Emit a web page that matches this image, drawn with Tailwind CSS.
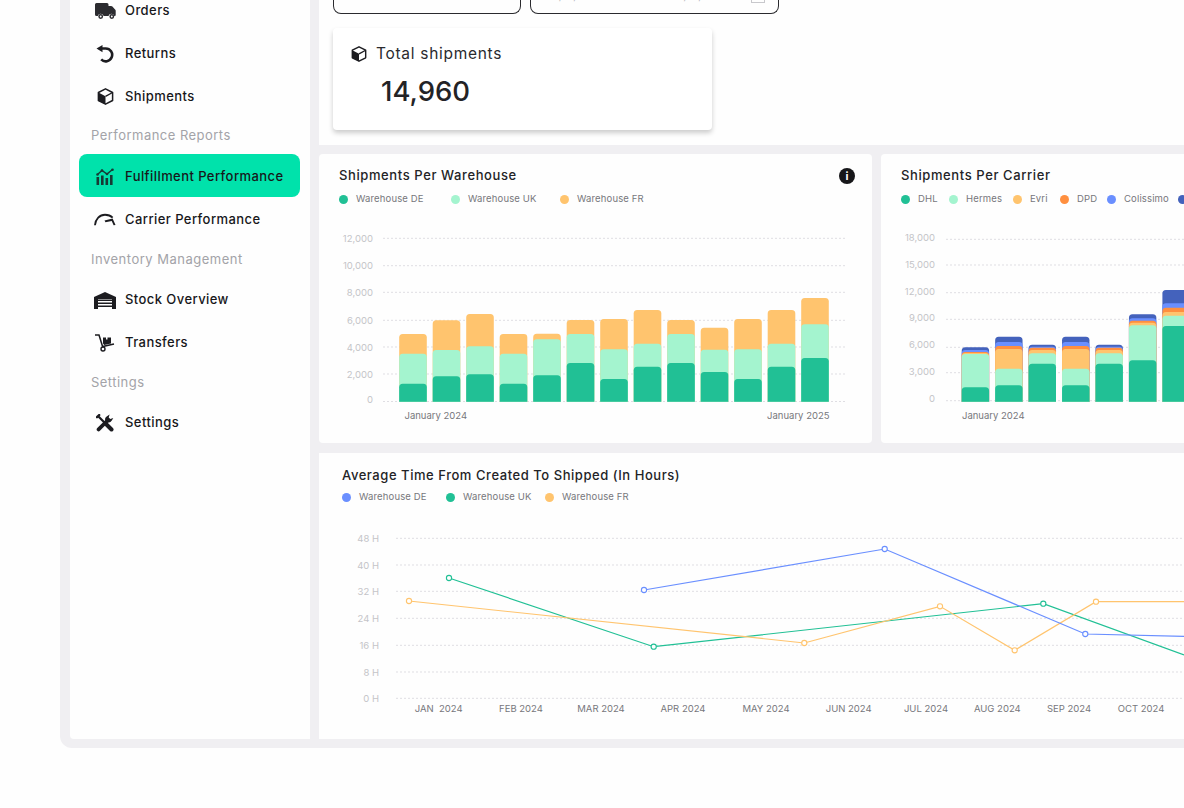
<!DOCTYPE html>
<html lang="en">
<head>
    <meta charset="UTF-8">
    <meta name="viewport" content="width=device-width, initial-scale=1.0">
    <title>Fulfillment Performance</title>
    <script src="https://cdn.jsdelivr.net/npm/@tailwindcss/browser@4"></script>
</head>
<body class="bg-[#fefefe] font-['Inter',sans-serif] text-[#1c1c20] overflow-hidden">
    <div class="ml-[60px] h-[748px] w-[1124px] bg-[#f0eff2] rounded-bl-[12px] overflow-hidden flex pl-[10px] pb-[9px] gap-[9px]">

        <!-- sidebar -->
        <aside class="w-[240px] shrink-0 bg-[#fefefe] rounded-bl-[4px] overflow-hidden pl-[9px] pr-[10px]">
            <nav class="-mt-[12px] text-[13px] tracking-[0.43px] font-medium text-[#17171a]">
                <a class="h-[43px] flex items-center gap-[9px] pl-[15px] pt-[2px]">
                    <span class="w-[22px] flex justify-center">
                        <svg width="21" height="16" viewBox="0 0 21 16" fill="#2b2b2f"><path d="M1.5 0H12a1.5 1.5 0 0 1 1.5 1.5V3h2.6c.5 0 1 .2 1.3.6l2.9 3.2c.3.3.4.7.4 1.1V12a1 1 0 0 1-1 1h-.4a3 3 0 0 0-5.8 0H8.6a3 3 0 0 0-5.8 0H1.5A1.5 1.5 0 0 1 0 11.5V1.5A1.5 1.5 0 0 1 1.5 0Z"/><circle cx="5.7" cy="13.5" r="1.7" fill="none" stroke="#2b2b2f" stroke-width="1.5"/><circle cx="16.8" cy="13.5" r="1.7" fill="none" stroke="#2b2b2f" stroke-width="1.5"/></svg>
                    </span>
                    Orders
                </a>
                <a class="h-[43px] flex items-center gap-[9px] pl-[15px] pt-[2px]">
                    <span class="w-[22px] flex justify-center">
                        <svg width="18" height="18" viewBox="0 0 18 18" fill="none"><path d="M5 3.5h4.7a6.4 6.4 0 1 1-4.5 10.9" stroke="#1c1c20" stroke-width="2.6"/><path d="M6.5 0V7.2L0.5 3.6Z" fill="#1c1c20"/></svg>
                    </span>
                    Returns
                </a>
                <a class="h-[43px] flex items-center gap-[9px] pl-[15px] pt-[2px]">
                    <span class="w-[22px] flex justify-center">
                        <svg width="17" height="17" viewBox="0 0 17 17"><path d="M8.5 .8 15.6 4.5v8L8.5 16.2 1.4 12.5v-8Z" fill="#fff" stroke="#1c1c20" stroke-width="1.5" stroke-linejoin="round"/><path d="M1.4 4.5 8.5 8.3v7.9L1.4 12.5Z" fill="#1c1c20"/><path d="M8.5 8.3 15.6 4.5" stroke="#1c1c20" stroke-width="1.4"/></svg>
                    </span>
                    Shipments
                </a>
                <p class="h-[37px] flex items-center pl-[12px] pt-[1px] tracking-[0.47px] text-[#a3a3a8] font-normal">Performance Reports</p>
                <a class="h-[43px] flex items-center gap-[9px] pl-[15px] pt-[2px] bg-[#00e2ab] rounded-[8px]">
                    <span class="w-[22px] flex justify-center">
                        <svg width="19" height="17" viewBox="0 0 19 17" fill="#173a35"><rect x="0.5" y="9" width="2.6" height="8"/><rect x="5" y="7.5" width="2.6" height="9.5"/><rect x="9.5" y="10" width="2.6" height="7"/><rect x="14" y="7" width="2.6" height="10"/><path d="M1.5 6.5 6 2.5l5 3.5 5.5-4.5" fill="none" stroke="#173a35" stroke-width="1.4"/><circle cx="1.5" cy="6.5" r="1.3"/><circle cx="6" cy="2.5" r="1.3"/><circle cx="11" cy="6" r="1.3"/><circle cx="16.5" cy="1.7" r="1.3"/></svg>
                    </span>
                    Fulfillment Performance
                </a>
                <a class="h-[43px] flex items-center gap-[9px] pl-[15px] pt-[2px]">
                    <span class="w-[22px] flex justify-center">
                        <svg width="23" height="13" viewBox="0 0 23 13" fill="none"><path d="M1 12.5C1.5 6 6 1.5 11.5 1.5c3.4 0 6 1 8 3" stroke="#1c1c20" stroke-width="1.9"/><path d="M11 7.5 19.5 5.5l3 6.8-2 .2-2-4.5L12 9.5Z" fill="#1c1c20"/></svg>
                    </span>
                    Carrier Performance
                </a>
                <p class="h-[38px] flex items-center pl-[12px] pt-[1px] tracking-[0.5px] text-[#a3a3a8] font-normal">Inventory Management</p>
                <a class="h-[43px] flex items-center gap-[9px] pl-[15px] pt-[1px]">
                    <span class="w-[22px] flex justify-center">
                        <svg width="22" height="17" viewBox="0 0 22 17"><path d="M0 5 11 0l11 5v12H0Z" fill="#1c1c20"/><rect x="4" y="7" width="14" height="10" fill="#fff"/><path d="M4 8.2h14M4 11.2h14M4 14.2h14" stroke="#1c1c20" stroke-width="1.5"/></svg>
                    </span>
                    Stock Overview
                </a>
                <a class="h-[43px] flex items-center gap-[9px] pl-[15px] pt-[1px]">
                    <span class="w-[22px] flex justify-center">
                        <svg width="20" height="18" viewBox="0 0 20 18" fill="none"><path d="M0 1h4l3.6 11.5L19 10" stroke="#1c1c20" stroke-width="1.5"/><circle cx="8" cy="15" r="2" stroke="#1c1c20" stroke-width="1.4"/><path d="M8 3.5h3v2h1.5v-2h3.5v6l-6.8 1.5L8 9.5Z" fill="#1c1c20"/></svg>
                    </span>
                    Transfers
                </a>
                <p class="h-[37px] flex items-center pl-[12px] pt-[1px] tracking-[0.47px] text-[#a3a3a8] font-normal">Settings</p>
                <a class="h-[43px] flex items-center gap-[9px] pl-[15px] pt-[1px]">
                    <span class="w-[22px] flex justify-center">
                        <svg width="18" height="18" viewBox="0 0 18 18" fill="none" stroke="#1c1c20" stroke-linecap="round"><path d="M3 3 9 9" stroke-width="2.2"/><path d="M1 3.2 3.2 1" stroke-width="2.4"/><path d="M9.5 9.5 15.5 15.5" stroke-width="4"/><path d="M2.6 15.4 10.5 7.5" stroke-width="3.8"/><path d="M9.6 7.2a3.8 3.8 0 0 1 1.4-5L13.6.6l-.9 3 1.6 1.4 3-1-1.5 2.6a3.8 3.8 0 0 1-5 1.4Z" fill="#1c1c20" stroke="none"/></svg>
                    </span>
                    Settings
                </a>
            </nav>
        </aside>

        <!-- main column -->
        <main class="flex-1 min-w-0 flex flex-col overflow-hidden">
            <section class="h-[145px] shrink-0 bg-[#fefefe] pl-[14px]">
                <div class="flex gap-[9px]">
                    <div class="w-[188px] h-[14px] border-x border-b border-[#2a2a2e] rounded-b-[8px]"></div>
                    <div class="w-[249px] h-[14px] border-x border-b border-[#2a2a2e] rounded-b-[8px] overflow-hidden relative">
                        <div class="absolute bottom-[11px] left-[17px] w-[180px] flex justify-between text-[10.5px] leading-none text-[#b8b8bc]">
                            <span>01/01/2024</span>
                            <span>01/01/2025</span>
                        </div>
                        <div class="absolute bottom-[10px] right-[13px] w-[14px] h-[8px] border border-[#c8c8cc]"></div>
                    </div>
                </div>
                <div class="mt-[14px] w-[379px] h-[102px] bg-white rounded-[4px] shadow-[0_3px_5px_rgba(0,0,0,0.2)] pl-[18px] pt-[16px]">
                    <div class="flex items-center gap-[9px] h-[20px]">
                        <svg width="16" height="16" viewBox="0 0 17 17"><path d="M8.5 .8 15.6 4.5v8L8.5 16.2 1.4 12.5v-8Z" fill="#fff" stroke="#1c1c20" stroke-width="1.5" stroke-linejoin="round"/><path d="M1.4 4.5 8.5 8.3v7.9L1.4 12.5Z" fill="#1c1c20"/><path d="M8.5 8.3 15.6 4.5" stroke="#1c1c20" stroke-width="1.4"/></svg>
                        <span class="text-[15.5px] tracking-[0.7px] text-[#2a2a2e]">Total shipments</span>
                    </div>
                    <p class="mt-[8px] ml-[30px] text-[27.5px] leading-[38px] font-medium text-[#232326]">14,960</p>
                </div>
            </section>

            <div class="mt-[9px] h-[289px] shrink-0 flex gap-[9px]">
                <section class="w-[553px] shrink-0 bg-[#fefefe] rounded-[4px] pt-[12px] relative">
                    <h2 class="h-[18px] pl-[20px] text-[13px] tracking-[0.6px] leading-[18px] font-medium text-[#232326]">Shipments Per Warehouse</h2>
                    <span class="absolute left-[520px] top-[14px] w-[16px] h-[16px] rounded-full bg-[#17171a] text-white text-[11px] leading-[16px] font-bold text-center">i</span>
                    <div class="mt-[6px] h-[18px] pl-[20px] pt-[1px] flex items-center text-[9.5px] tracking-[0.15px] text-[#77777c]">
                        <span class="w-[112px] flex items-center gap-[8px]"><i class="w-[9px] h-[9px] rounded-full bg-[#21c095]"></i>Warehouse DE</span>
                        <span class="w-[109px] flex items-center gap-[8px]"><i class="w-[9px] h-[9px] rounded-full bg-[#a4f4cf]"></i>Warehouse UK</span>
                        <span class="flex items-center gap-[8px]"><i class="w-[9px] h-[9px] rounded-full bg-[#ffc46e]"></i>Warehouse FR</span>
                    </div>
                    <div id="warehouse-chart"></div>
                </section>
                <section class="w-[553px] shrink-0 bg-[#fefefe] rounded-[4px] pt-[12px]">
                    <h2 class="h-[18px] pl-[20px] text-[13px] tracking-[0.6px] leading-[18px] font-medium text-[#232326]">Shipments Per Carrier</h2>
                    <div class="mt-[6px] h-[18px] pl-[20px] pt-[1px] flex items-center text-[9.5px] tracking-[0.15px] text-[#77777c]">
                        <span class="w-[48px] flex items-center gap-[8px]"><i class="w-[9px] h-[9px] rounded-full bg-[#21c095]"></i>DHL</span>
                        <span class="w-[64px] flex items-center gap-[8px]"><i class="w-[9px] h-[9px] rounded-full bg-[#a4f4cf]"></i>Hermes</span>
                        <span class="w-[47px] flex items-center gap-[8px]"><i class="w-[9px] h-[9px] rounded-full bg-[#ffc46e]"></i>Evri</span>
                        <span class="w-[47px] flex items-center gap-[8px]"><i class="w-[9px] h-[9px] rounded-full bg-[#ff8f3f]"></i>DPD</span>
                        <span class="w-[71px] flex items-center gap-[8px]"><i class="w-[9px] h-[9px] rounded-full bg-[#6a8fff]"></i>Colissimo</span>
                        <span class="flex items-center gap-[8px]"><i class="w-[9px] h-[9px] rounded-full bg-[#4462bc]"></i>Other</span>
                    </div>
                    <div id="carrier-chart"></div>
                </section>
            </div>

            <section class="mt-[10px] flex-1 min-h-0 bg-[#fefefe] pt-[13px]">
                <h2 class="h-[18px] pl-[23px] text-[13px] tracking-[0.55px] leading-[18px] font-medium text-[#232326]">Average Time From Created To Shipped (In Hours)</h2>
                <div class="mt-[4px] h-[18px] pl-[23px] pt-[1px] flex items-center text-[9.5px] tracking-[0.15px] text-[#77777c]">
                    <span class="w-[104px] flex items-center gap-[8px]"><i class="w-[9px] h-[9px] rounded-full bg-[#6a8fff]"></i>Warehouse DE</span>
                    <span class="w-[99px] flex items-center gap-[8px]"><i class="w-[9px] h-[9px] rounded-full bg-[#21c095]"></i>Warehouse UK</span>
                    <span class="flex items-center gap-[8px]"><i class="w-[9px] h-[9px] rounded-full bg-[#ffc46e]"></i>Warehouse FR</span>
                </div>
                <div id="time-chart"></div>
            </section>
        </main>
    </div>

    <script>
        const green = '#21c095', mint = '#a4f4cf', orange = '#ffc46e', dpd = '#ff8f3f', blue = '#6a8fff', navy = '#4462bc';
        const baseline = 401.7;

        function grid(x1, x2, rows, labelX) {
            return rows.map(([label, y, ty]) => `
                <line x1="${x1}" x2="${x2}" y1="${y}" y2="${y}" stroke="#dfdee3" stroke-width="1" stroke-dasharray="2 2"/>
                <text x="${labelX}" y="${(ty ?? y) + 3.5}" text-anchor="end" font-size="9.5" fill="#c4c4c8">${label}</text>
            `).join('');
        }

        // bar with a rounded top that runs down to the baseline, so stacks are painted tallest first
        function segment(x, w, top, color) {
            const r = 3.5;
            return `<path fill="${color}" d="M${x} ${baseline}V${top + r}a${r} ${r} 0 0 1 ${r} ${-r}H${x + w - r}a${r} ${r} 0 0 1 ${r} ${r}V${baseline}Z"/>`;
        }

        function bars(startX, step, width, data, colors) {
            return data.map((tops, i) => tops.map((top, j) =>
                segment(startX + i * step, width, 150 + top / 3, colors[j])
            ).join('')).join('');
        }

        function label(x, y, text, anchor = 'start') {
            return `<text x="${x}" y="${y}" text-anchor="${anchor}" font-size="9.5" fill="#77777c">${text}</text>`;
        }

        // tops are read off the chart, from the top segment down
        const warehouseBars = [
            [552, 611, 701], [511, 600, 679], [492, 589, 673], [552, 611, 701], [551, 568, 676],
            [510, 552, 639], [507, 598, 687], [480, 581, 650], [510, 552, 639], [533, 599, 666],
            [507, 598, 687], [480, 581, 650], [444, 523, 624]
        ];
        const carrierBars = [
            [592, 600, 606, 609, 612, 712], [560, 576, 588, 597, 656, 706], [584, 590, 593, 600, 610, 641],
            [560, 576, 588, 597, 656, 706], [584, 590, 593, 600, 610, 641], [493, 505, 512, 518, 526, 631],
            [420, 460, 473, 486, 497, 528]
        ];

        document.getElementById('warehouse-chart').innerHTML = `
            <svg class="block" width="553" height="235" viewBox="319 208 553 235">
                ${grid(383, 847, [['12,000', 238.3], ['10,000', 265.7], ['8,000', 292.3], ['6,000', 320.3], ['4,000', 347], ['2,000', 374], ['0', 401.5, 399.5]], 373)}
                ${bars(399.2, 33.5, 27.6, warehouseBars, [orange, mint, green])}
                ${label(404.5, 419, 'January 2024')}
                ${label(829.5, 419, 'January 2025', 'end')}
            </svg>`;

        document.getElementById('carrier-chart').innerHTML = `
            <svg class="block" width="553" height="235" viewBox="881 208 553 235">
                ${grid(946, 1434, [['18,000', 239.3, 237.3], ['15,000', 265, 264], ['12,000', 292.7, 291], ['9,000', 319.3, 317.5], ['6,000', 347.3, 344.5], ['3,000', 372.7, 371], ['0', 400.7, 398]], 935)}
                ${bars(961.7, 33.45, 27.4, carrierBars, [navy, blue, dpd, orange, mint, green])}
                ${label(962, 419, 'January 2024')}
            </svg>`;

        const lines = [
            { color: green, points: [[449, 578], [653.7, 646.7], [1043.3, 603.7], [1184, 655]] },
            { color: orange, points: [[409, 601], [804.3, 643], [940, 606.3], [1014.7, 650.3], [1096, 601.7], [1184, 601.7]] },
            { color: blue, points: [[644, 590], [884.7, 549], [1085.3, 634], [1184, 636.3]] }
        ];
        const months = [['JAN  2024', 438.7], ['FEB 2024', 521], ['MAR 2024', 601], ['APR 2024', 683], ['MAY 2024', 766], ['JUN 2024', 848.7], ['JUL 2024', 926], ['AUG 2024', 997.3], ['SEP 2024', 1069], ['OCT 2024', 1141]];

        document.getElementById('time-chart').innerHTML = `
            <svg class="block" width="865" height="235" viewBox="319 506 865 235">
                ${grid(396, 1184, [['48 H', 538.3], ['40 H', 565], ['32 H', 591.3], ['24 H', 618.3], ['16 H', 645.3], ['8 H', 672], ['0 H', 698.3]], 379)}
                ${lines.map(line => `
                    <polyline fill="none" stroke="${line.color}" stroke-width="1.2" points="${line.points.map(p => p.join(',')).join(' ')}"/>
                    ${line.points.slice(0, -1).map(p => `<circle cx="${p[0]}" cy="${p[1]}" r="2.6" fill="#fff" stroke="${line.color}" stroke-width="1.1"/>`).join('')}
                `).join('')}
                ${months.map(([text, x]) => `<text x="${x}" y="712" text-anchor="middle" xml:space="preserve" font-size="9.5" fill="#77777c">${text}</text>`).join('')}
            </svg>`;
    </script>
</body>
</html>
